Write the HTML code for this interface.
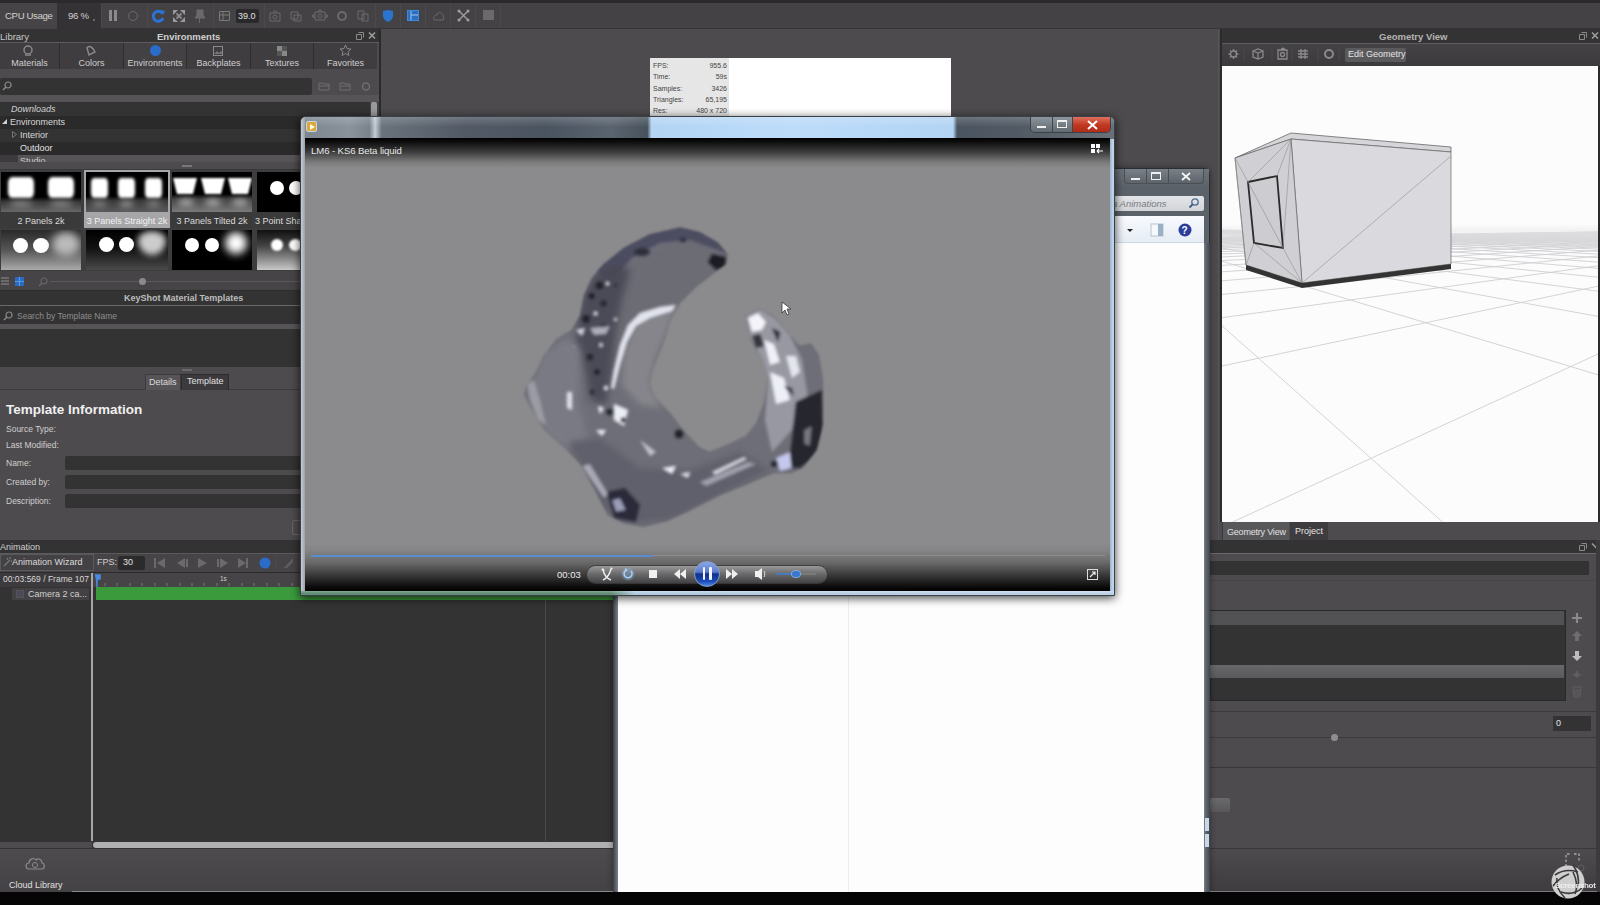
<!DOCTYPE html>
<html><head><meta charset="utf-8">
<style>
*{margin:0;padding:0;box-sizing:border-box}
html,body{width:1600px;height:905px;overflow:hidden;background:#111;font-family:"Liberation Sans",sans-serif;color:#ddd}
.a{position:absolute}
.t{position:absolute;white-space:nowrap;font-size:9px;line-height:1;color:#d8d8d8}
.sep{position:absolute;top:4px;width:1px;height:24px;background:#4a4a4c}
.ic{position:absolute;top:9px;width:14px;height:14px}
.tab{position:absolute;top:43px;height:26px;background:#403d40;border-right:1px solid #2e2d2e}
.tab .t{top:16px;width:100%;text-align:center;font-size:9px;color:#cfcfcf}
.th{position:absolute;background:#000;overflow:hidden}
.blob{position:absolute;background:#fff;filter:blur(1.5px)}
</style></head><body>
<div class="a" style="left:0;top:0;width:1600px;height:905px;background:#454245;overflow:hidden">

<!-- ================= TOP TOOLBAR ================= -->
<div class="a" style="left:0;top:0;width:1600px;height:30px;background:#454245"></div>
<div class="a" style="left:0;top:0;width:1600px;height:3px;background:#2a2a2c"></div>
<div class="a" style="left:0;top:28px;width:1600px;height:1px;background:#363436"></div>
<div class="a" style="left:0;top:3px;width:57px;height:26px;background:#474447"></div><div class="t" style="left:5px;top:11px;font-size:9.6px;letter-spacing:-0.35px;color:#d0d0d0">CPU Usage</div>
<div class="a" style="left:57px;top:3px;width:44px;height:26px;background:#343234"></div>
<div class="t" style="left:68px;top:11px;font-size:9.6px;letter-spacing:-0.3px;color:#d0d0d0">96 %</div><div class="a" style="left:93px;top:19px;width:2px;height:2px;background:#666"></div>
<div class="sep" style="left:101px"></div>
<div class="a" style="left:109px;top:10px;width:3px;height:11px;background:#8a8a8a"></div>
<div class="a" style="left:114px;top:10px;width:3px;height:11px;background:#8a8a8a"></div>
<div class="a" style="left:128px;top:11px;width:10px;height:10px;border:1.5px solid #6a6a6a;border-radius:50%"></div>
<div class="sep" style="left:147px"></div>
<svg class="a" style="left:151px;top:9px" width="14" height="14"><path d="M11.5 4.5 A5 5 0 1 0 12 9" fill="none" stroke="#2a74d8" stroke-width="3"/><path d="M9 1l5 1-2 4z" fill="#2a74d8"/></svg>
<svg class="a" style="left:173px;top:10px" width="12" height="12"><path d="M3.5 3.5L8.5 8.5M8.5 3.5L3.5 8.5" stroke="#8a8a8a" stroke-width="2"/><path d="M0 0h5l-5 5z M12 0v5l-5-5z M0 12v-5l5 5z M12 12h-5l5-5z" fill="#9a9a9a"/></svg>
<svg class="a" style="left:194px;top:9px" width="12" height="14"><path d="M3 1h6v5l2 3H1l2-3z M5.5 9v5" fill="#6a6a6a" stroke="#6a6a6a"/></svg>
<div class="sep" style="left:213px"></div>
<svg class="a" style="left:219px;top:11px" width="11" height="10"><path d="M0.5 0.5h10v9h-10z M0.5 4h10 M4 0.5v9" fill="none" stroke="#7a7a7a"/></svg>
<div class="a" style="left:236px;top:9px;width:23px;height:14px;background:#29292b;border-radius:2px"></div>
<div class="t" style="left:238px;top:12px;font-size:9px;color:#e0e0e0">39.0</div>
<div class="sep" style="left:264px"></div>
<svg class="a" style="left:269px;top:10px" width="12" height="12"><path d="M1 3h10v8H1z M4 3l1-2h2l1 2" fill="none" stroke="#6a6a6a"/><circle cx="6" cy="7" r="2" fill="none" stroke="#6a6a6a"/></svg>
<svg class="a" style="left:290px;top:10px" width="12" height="12"><path d="M1 2h7v7H1z M4 5h7v6H4z" fill="none" stroke="#6a6a6a"/></svg>
<svg class="a" style="left:311px;top:9px" width="18" height="13"><path d="M4 3h10v8H4z M7 3l1-2h2l1 2 M1 7l2-2v4z M17 7l-2-2v4z" fill="none" stroke="#6a6a6a"/><circle cx="9" cy="7" r="2" fill="none" stroke="#6a6a6a"/></svg>
<svg class="a" style="left:336px;top:10px" width="12" height="12"><circle cx="6" cy="6" r="4" fill="none" stroke="#6a6a6a" stroke-width="2"/></svg>
<svg class="a" style="left:357px;top:10px" width="12" height="12"><path d="M1 1h6v8H1z M5 4h6v7H5z" fill="none" stroke="#6a6a6a"/></svg>
<div class="sep" style="left:375px"></div>
<svg class="a" style="left:382px;top:9px" width="12" height="13"><path d="M1 2l5-1 5 1v5c0 3-3 5-5 6-2-1-5-3-5-6z" fill="#2a74d0"/></svg>
<div class="sep" style="left:400px"></div>
<svg class="a" style="left:407px;top:10px" width="12" height="11"><rect x="0.5" y="0.5" width="11" height="10" fill="#2c6fc0" stroke="#3d8ae0"/><path d="M4 1v9M4 5h7" stroke="#9cc6f0"/></svg>
<div class="sep" style="left:425px"></div>
<svg class="a" style="left:432px;top:9px" width="13" height="13"><path d="M2 11c-1-2 0-5 3-5 0-3 5-3 6 0 1 1 1 4 0 5z" fill="none" stroke="#6a6a6a"/></svg>
<div class="sep" style="left:450px"></div>
<svg class="a" style="left:457px;top:9px" width="13" height="13"><path d="M2 2l9 9M11 2L2 11" stroke="#a0a0a0" stroke-width="1.3"/><circle cx="2" cy="2" r="1.5" fill="#a0a0a0"/><circle cx="11" cy="2" r="1.5" fill="#a0a0a0"/><circle cx="2" cy="11" r="1.5" fill="#a0a0a0"/><circle cx="11" cy="11" r="1.5" fill="#a0a0a0"/></svg>
<div class="sep" style="left:475px"></div>
<div class="a" style="left:483px;top:10px;width:11px;height:10px;background:#6a6a6a"></div>
<div class="sep" style="left:500px"></div>
<!-- ================= LIBRARY PANEL ================= -->
<div class="a" style="left:0;top:29px;width:379px;height:512px;background:#4e4b4e"></div>
<div class="a" style="left:0;top:29px;width:379px;height:13px;background:#333333"></div>
<div class="t" style="left:0;top:32px;font-size:9.5px;color:#c8c8c8">Library</div>
<div class="t" style="left:157px;top:32px;font-size:9.5px;font-weight:bold;color:#d0d0d0">Environments</div>
<svg class="a" style="left:355px;top:31px" width="22" height="10"><path d="M1.5 3.5h5v5h-5z M3.5 1.5h5v5" fill="none" stroke="#8a8a8a"/><path d="M14 1.5l6 6M20 1.5l-6 6" stroke="#a0a0a0" stroke-width="1.5"/></svg>
<div class="a" style="left:0;top:42px;width:379px;height:1px;background:#5c5b5e"></div>
<div class="tab" style="left:0;width:60px"><svg class="a" style="left:22px;top:2px" width="12" height="12"><circle cx="6" cy="5" r="4" fill="none" stroke="#8a8a8a" stroke-width="1.5"/><path d="M3 9h6v2H3z" fill="#777"/></svg><div class="t">Materials</div></div>
<div class="tab" style="left:60px;width:64px"><svg class="a" style="left:25px;top:2px" width="12" height="12"><path d="M2 3c2-3 6-1 8 4l-6 3z" fill="none" stroke="#8a8a8a" stroke-width="1.5"/></svg><div class="t">Colors</div></div>
<div class="tab" style="left:124px;width:63px;background:#444144"><div class="a" style="left:26px;top:2px;width:11px;height:11px;border-radius:50%;background:#2a6cc8"></div><div class="t">Environments</div></div>
<div class="tab" style="left:187px;width:64px"><svg class="a" style="left:25px;top:2px" width="12" height="12"><rect x="1.5" y="1.5" width="9" height="9" fill="none" stroke="#8a8a8a"/><path d="M2 9l3-3 2 2 2-2 2 3" fill="#777"/></svg><div class="t">Backplates</div></div>
<div class="tab" style="left:251px;width:63px"><svg class="a" style="left:25px;top:2px" width="12" height="12"><rect x="1" y="1" width="5" height="5" fill="#888"/><rect x="6" y="6" width="5" height="5" fill="#888"/><rect x="6" y="1" width="5" height="5" fill="#555"/><rect x="1" y="6" width="5" height="5" fill="#555"/></svg><div class="t">Textures</div></div>
<div class="tab" style="left:314px;width:63px;border-right:none"><svg class="a" style="left:25px;top:1px" width="13" height="13"><path d="M6.5 1l1.6 3.6 3.9.4-2.9 2.6.8 3.9-3.4-2-3.4 2 .8-3.9L1 5l3.9-.4z" fill="none" stroke="#8a8a8a"/></svg><div class="t">Favorites</div></div>
<!-- search -->
<div class="a" style="left:0;top:78px;width:312px;height:17px;background:#333333;border-radius:2px"></div>
<svg class="a" style="left:2px;top:81px" width="10" height="10"><circle cx="6" cy="4" r="3" fill="none" stroke="#8a8a8a" stroke-width="1.2"/><path d="M4 6L1 9" stroke="#8a8a8a" stroke-width="1.5"/></svg>
<svg class="a" style="left:318px;top:80px" width="60" height="12"><path d="M1 3h4l1 1h5v6H1z M2 6h9" fill="none" stroke="#6e6e6e"/><path d="M22 3h4l1 1h5v6H22z M23 6h9" fill="none" stroke="#6e6e6e"/><circle cx="48" cy="6.5" r="3.5" fill="none" stroke="#6e6e6e" stroke-width="1.5"/></svg>
<div class="a" style="left:0;top:95px;width:379px;height:7px;background:#575457"></div>
<!-- tree -->
<div class="a" style="left:0;top:102px;width:370px;height:14px;background:#333333"></div>
<div class="a" style="left:0;top:116px;width:370px;height:13px;background:#2a2a2a"></div>
<div class="a" style="left:0;top:129px;width:370px;height:13px;background:#333333"></div>
<div class="a" style="left:0;top:142px;width:370px;height:13px;background:#2a2a2a"></div>
<div class="a" style="left:0;top:155px;width:370px;height:7px;background:#3c3a3c"></div>
<div class="a" style="left:18px;top:155px;width:352px;height:7px;background:#575457"></div>
<div class="a" style="left:370px;top:102px;width:9px;height:60px;background:#474447"></div>
<div class="a" style="left:371px;top:102px;width:6px;height:17px;background:#9a9a9c;border-radius:2px"></div>
<div class="t" style="left:11px;top:105px;font-size:9px;font-style:italic;color:#cfcfcf">Downloads</div>
<svg class="a" style="left:1px;top:118px" width="7" height="7"><path d="M6 1v5H1z" fill="#d0d0d0"/></svg>
<div class="t" style="left:10px;top:118px;font-size:9px;color:#d8d8d8">Environments</div>
<svg class="a" style="left:12px;top:131px" width="5" height="7"><path d="M0.5 0.5l4 3-4 3z" fill="none" stroke="#777"/></svg>
<div class="t" style="left:20px;top:131px;font-size:9px;color:#d8d8d8">Interior</div>
<div class="t" style="left:20px;top:144px;font-size:9px;color:#e0e0e0">Outdoor</div>
<div class="a" style="left:0;top:155px;width:379px;height:7px;overflow:hidden"><div class="t" style="left:20px;top:2px;font-size:9px;color:#ccc">Studio</div></div>
<!-- splitter -->
<div class="a" style="left:0;top:162px;width:379px;height:8px;background:#4e4b4e"></div>
<div class="a" style="left:0;top:169px;width:379px;height:1px;background:#38383a"></div>
<div class="a" style="left:182px;top:165px;width:10px;height:2px;border-left:2px dotted #777;border-right:2px dotted #777;background:#777"></div>
<!-- thumbnails area -->
<div class="a" style="left:0;top:170px;width:379px;height:101px;background:#3f3c3f"></div>
<!-- thumbs row1 -->
<div class="th" style="left:1px;top:172px;width:80px;height:40px;background:linear-gradient(#000 0,#000 62%,#3a3a3a 75%,#666 100%)">
 <div class="blob" style="left:7px;top:5px;width:26px;height:21px;border-radius:4px/6px"></div>
 <div class="blob" style="left:47px;top:5px;width:26px;height:21px;border-radius:4px/6px"></div>
 <div class="blob" style="left:8px;top:29px;width:24px;height:6px;border-radius:50%;background:#8a8a8a;filter:blur(3px)"></div>
 <div class="blob" style="left:48px;top:29px;width:24px;height:6px;border-radius:50%;background:#8a8a8a;filter:blur(3px)"></div>
</div>
<div class="a" style="left:0;top:212px;width:82px;height:16px;background:#3a3a3a"></div>
<div class="t" style="left:0;top:217px;width:82px;text-align:center;font-size:9px;color:#dcdcdc">2 Panels 2k</div>
<div class="a" style="left:84px;top:170px;width:86px;height:58px;background:#a6a6a8"></div>
<div class="th" style="left:86px;top:172px;width:82px;height:40px;background:linear-gradient(#000 0,#000 60%,#3a3a3a 72%,#5a5a5a 100%)">
 <div class="blob" style="left:5px;top:6px;width:17px;height:20px;border-radius:3px/5px"></div>
 <div class="blob" style="left:32px;top:6px;width:17px;height:20px;border-radius:3px/5px"></div>
 <div class="blob" style="left:59px;top:6px;width:17px;height:20px;border-radius:3px/5px"></div>
 <div class="blob" style="left:6px;top:29px;width:15px;height:6px;border-radius:50%;background:#888;filter:blur(3px)"></div>
 <div class="blob" style="left:33px;top:29px;width:15px;height:6px;border-radius:50%;background:#999;filter:blur(3px)"></div>
 <div class="blob" style="left:60px;top:29px;width:15px;height:6px;border-radius:50%;background:#888;filter:blur(3px)"></div>
</div>
<div class="t" style="left:84px;top:217px;width:86px;text-align:center;font-size:9px;color:#f2f2f2">3 Panels Straight 2k</div>
<div class="th" style="left:172px;top:172px;width:80px;height:40px;background:linear-gradient(#000 0,#000 55%,#444 68%,#7a7a7a 100%)">
 <svg class="a" style="left:0;top:0;filter:blur(0.8px)" width="80" height="40"><path d="M1 6h24l-4 16H5z M29 6h24l-4 16H33z M56 6h24l-4 16H60z" fill="#fff"/></svg>
 <div class="blob" style="left:6px;top:27px;width:16px;height:7px;border-radius:50%;background:#aaa;filter:blur(3px)"></div>
 <div class="blob" style="left:33px;top:27px;width:16px;height:7px;border-radius:50%;background:#aaa;filter:blur(3px)"></div>
 <div class="blob" style="left:60px;top:27px;width:16px;height:7px;border-radius:50%;background:#aaa;filter:blur(3px)"></div>
</div>
<div class="a" style="left:171px;top:212px;width:82px;height:16px;background:#3a3a3a"></div>
<div class="t" style="left:171px;top:217px;width:82px;text-align:center;font-size:9px;color:#dcdcdc">3 Panels Tilted 2k</div>
<div class="th" style="left:257px;top:172px;width:50px;height:40px;background:#000">
 <div class="blob" style="left:13px;top:9px;width:14px;height:14px;border-radius:50%;filter:blur(0.7px)"></div>
 <div class="blob" style="left:32px;top:9px;width:14px;height:14px;border-radius:50%;filter:blur(0.7px)"></div>
</div>
<div class="a" style="left:255px;top:212px;width:60px;height:16px;background:#3a3a3a"></div>
<div class="t" style="left:255px;top:217px;font-size:9px;color:#dcdcdc">3 Point Sha</div>
<!-- thumbs row2 -->
<div class="th" style="left:1px;top:230px;width:80px;height:40px;background:linear-gradient(#2a2a2a,#555 50%,#aaa 100%)">
 <div class="blob" style="left:12px;top:8px;width:15px;height:15px;border-radius:50%;filter:blur(0.7px)"></div>
 <div class="blob" style="left:32px;top:8px;width:16px;height:15px;border-radius:50%;filter:blur(0.7px)"></div>
 <div class="blob" style="left:51px;top:2px;width:28px;height:24px;border-radius:50%;background:#bbb;filter:blur(4px)"></div>
</div>
<div class="th" style="left:86px;top:230px;width:82px;height:40px;background:linear-gradient(#000,#111 45%,#4a4a4a 100%)">
 <div class="blob" style="left:13px;top:7px;width:15px;height:15px;border-radius:50%;filter:blur(0.7px)"></div>
 <div class="blob" style="left:33px;top:7px;width:15px;height:15px;border-radius:50%;filter:blur(0.7px)"></div>
 <div class="blob" style="left:52px;top:1px;width:28px;height:24px;border-radius:50% 50% 50% 50%/40% 40% 60% 60%;background:#ccc;filter:blur(3px)"></div>
</div>
<div class="th" style="left:172px;top:230px;width:80px;height:40px;background:#000">
 <div class="blob" style="left:13px;top:8px;width:14px;height:14px;border-radius:50%;filter:blur(0.7px)"></div>
 <div class="blob" style="left:33px;top:8px;width:14px;height:14px;border-radius:50%;filter:blur(0.7px)"></div>
 <div class="blob" style="left:53px;top:2px;width:22px;height:22px;border-radius:50%;filter:blur(4px)"></div>
</div>
<div class="th" style="left:257px;top:230px;width:50px;height:40px;background:linear-gradient(#111,#444 40%,#c8c8c8 100%)">
 <div class="blob" style="left:14px;top:9px;width:12px;height:12px;border-radius:50%;filter:blur(1.2px)"></div>
 <div class="blob" style="left:32px;top:9px;width:13px;height:12px;border-radius:50%;filter:blur(1.2px)"></div>
</div>
<!-- thumb toolbar -->
<div class="a" style="left:0;top:271px;width:379px;height:20px;background:#474447"></div>
<svg class="a" style="left:1px;top:277px" width="60" height="12"><path d="M0 1h8M0 4h8M0 7h8" stroke="#777" stroke-width="1.5"/><rect x="14" y="0" width="9" height="9" fill="#2a6ac0"/><path d="M18.5 0v9M14 4.5h9" stroke="#5a9ae0"/><circle cx="43" cy="4" r="3" fill="none" stroke="#666" stroke-width="1.2"/><path d="M41 6L38 9" stroke="#666" stroke-width="1.5"/></svg>
<div class="a" style="left:50px;top:281px;width:250px;height:1px;background:#5a5a5c"></div>
<div class="a" style="left:139px;top:278px;width:7px;height:7px;border-radius:50%;background:#8a8a8a"></div>
<div class="a" style="left:0;top:290px;width:379px;height:1px;background:#2e2d2e"></div>
<!-- templates -->
<div class="a" style="left:0;top:291px;width:379px;height:14px;background:#333333"></div>
<div class="t" style="left:124px;top:294px;font-size:9px;font-weight:bold;color:#bdbdbd">KeyShot Material Templates</div>
<div class="a" style="left:0;top:305px;width:379px;height:1px;background:#6a6a6c"></div>
<div class="a" style="left:0;top:306px;width:379px;height:18px;background:#333333"></div>
<svg class="a" style="left:3px;top:311px" width="10" height="10"><circle cx="6" cy="4" r="3" fill="none" stroke="#888" stroke-width="1.2"/><path d="M4 6L1 9" stroke="#888" stroke-width="1.5"/></svg>
<div class="t" style="left:17px;top:312px;font-size:8.5px;color:#8e8e8e">Search by Template Name</div>
<div class="a" style="left:0;top:324px;width:379px;height:5px;background:#575457"></div>
<div class="a" style="left:0;top:329px;width:379px;height:38px;background:#333333"></div>
<div class="a" style="left:182px;top:369px;width:10px;height:2px;background:#6a6a6c"></div>
<div class="a" style="left:0;top:389px;width:379px;height:1px;background:#3c3a3c"></div>
<div class="a" style="left:145px;top:374px;width:36px;height:16px;background:#575457;border:1px solid #3c3a3c;border-bottom:none"></div>
<div class="t" style="left:149px;top:378px;font-size:9px;color:#dcdcdc">Details</div>
<div class="a" style="left:181px;top:374px;width:48px;height:16px;background:#3c3a3c;border:1px solid #2e2d2e;border-bottom:none"></div>
<div class="t" style="left:187px;top:377px;font-size:9px;color:#e2e2e2">Template</div>
<div class="t" style="left:6px;top:403px;font-size:13.5px;font-weight:bold;color:#f0f0f0">Template Information</div>
<div class="t" style="left:6px;top:425px;font-size:8.5px;color:#cfcfcf">Source Type:</div>
<div class="t" style="left:6px;top:441px;font-size:8.5px;color:#cfcfcf">Last Modified:</div>
<div class="t" style="left:6px;top:459px;font-size:8.5px;color:#cfcfcf">Name:</div>
<div class="a" style="left:65px;top:456px;width:314px;height:14px;background:#333333;border-radius:2px"></div>
<div class="t" style="left:6px;top:478px;font-size:8.5px;color:#cfcfcf">Created by:</div>
<div class="a" style="left:65px;top:475px;width:314px;height:14px;background:#333333;border-radius:2px"></div>
<div class="t" style="left:6px;top:497px;font-size:8.5px;color:#cfcfcf">Description:</div>
<div class="a" style="left:65px;top:494px;width:314px;height:14px;background:#333333;border-radius:2px"></div>
<div class="a" style="left:292px;top:520px;width:10px;height:15px;border:1px solid #666;border-radius:2px"></div>
<div class="a" style="left:379px;top:29px;width:2px;height:512px;background:#2c2b2c"></div>
<!-- ================= MAIN VIEWPORT ================= -->
<div class="a" style="left:381px;top:29px;width:839px;height:570px;background:#4e4b4e"></div><div class="a" style="left:1218px;top:29px;width:1px;height:512px;background:#575457"></div>
<div class="a" style="left:650px;top:58px;width:301px;height:62px;background:#fff"></div>
<div class="a" style="left:650px;top:58px;width:79px;height:62px;background:#e6e6e6"></div>
<div class="t" style="left:653px;top:60px;font-size:7px;line-height:11.3px;color:#444">FPS:<br>Time:<br>Samples:<br>Triangles:<br>Res:</div>
<div class="t" style="left:680px;top:60px;width:47px;text-align:right;font-size:7px;line-height:11.3px;color:#444">955.6<br>59s<br>3426<br>65,195<br>480 x 720</div>

<!-- ================= GEOMETRY VIEW ================= -->
<div class="a" style="left:1220px;top:29px;width:380px;height:512px;background:#4e4b4e"></div>
<div class="a" style="left:1220px;top:29px;width:380px;height:14px;background:#333333"></div>
<div class="t" style="left:1379px;top:32px;font-size:9.5px;font-weight:bold;color:#b4b4b4">Geometry View</div>
<svg class="a" style="left:1578px;top:31px" width="22" height="10"><path d="M1.5 3.5h5v5h-5z M3.5 1.5h5v5" fill="none" stroke="#8a8a8a"/><path d="M14 1.5l6 6M20 1.5l-6 6" stroke="#a0a0a0" stroke-width="1.5"/></svg>
<div class="a" style="left:1220px;top:43px;width:380px;height:1px;background:#5c5b5e"></div>
<div class="a" style="left:1220px;top:44px;width:380px;height:22px;background:linear-gradient(#454245,#3c3a3c)"></div>
<svg class="a" style="left:1226px;top:47px" width="120" height="16">
 <g fill="none" stroke="#8a8a8a" stroke-width="1.3">
 <circle cx="7.5" cy="7" r="3"/><path d="M7.5 2v2M7.5 10v2M2.5 7h2M10.5 7h2M4 3.5l1.4 1.4M9.6 9.1L11 10.5M4 10.5l1.4-1.4M9.6 4.9L11 3.5"/>
 <path d="M27 4l5-2 5 2v6l-5 2-5-2z M27 4l5 2 5-2 M32 6v6"/>
 <path d="M52 3h9v9h-9z M55 3l1-1.5h2l1 1.5"/><circle cx="56.5" cy="7.5" r="2"/>
 <path d="M72 4h10M72 7h10M72 10h10M75 2v10M79 2v10"/>
 <circle cx="103" cy="7" r="4" stroke-width="2"/>
 </g>
 <path d="M18 2v12M46 2v12M66 2v12M92 2v12M113 2v12" stroke="#4a4a4c"/>
</svg>
<div class="a" style="left:1345px;top:48px;width:61px;height:14px;background:#5a595c;border-radius:2px"></div>
<div class="t" style="left:1348px;top:50px;font-size:9px;color:#e6e6e6">Edit Geometry</div>
<div class="a" style="left:1220px;top:29px;width:2px;height:493px;background:#2c2b2c"></div>
<div class="a" style="left:1222px;top:66px;width:376px;height:456px;background:#fcfcfd;overflow:hidden">
<svg width="376" height="456" style="position:absolute;left:0;top:0">
 <g stroke="#cfcfd3" stroke-width="0.9" fill="none">
  <path d="M0 460.9 L376 288.0"/>
  <path d="M0 300.0 L376 220.2"/>
  <path d="M0 251.7 L376 199.8"/>
  <path d="M0 228.5 L376 190.0"/>
  <path d="M0 214.8 L376 184.2"/>
  <path d="M0 205.8 L376 180.5"/>
  <path d="M0 199.4 L376 177.8"/>
  <path d="M0 194.6 L376 175.8"/>
  <path d="M0 190.9 L376 174.2"/>
  <path d="M0 188.0 L376 173.0"/>
  <path d="M0 185.6 L376 172.0"/>
  <path d="M0 183.6 L376 171.1"/>
  <path d="M0 181.9 L376 170.4"/>
  <path d="M0 180.5 L376 169.8"/>
  <path d="M0 179.3 L376 169.3"/>
  <path d="M0 178.2 L376 168.8"/>
  <path d="M0 177.2 L376 168.4"/>
  <path d="M0 176.4 L376 168.1"/>
  <path d="M0 175.6 L376 167.7"/>
  <path d="M0 174.9 L376 167.4"/>
  <path d="M0 174.3 L376 167.2"/>
  <path d="M0 173.7 L376 166.9"/>
  <path d="M0 173.2 L376 166.7"/>
  <path d="M0 172.7 L376 166.5"/>
  <path d="M0 172.3 L376 166.3"/>
  <path d="M0 171.9 L376 166.2"/>
  <path d="M0 171.5 L376 166.0"/>
  <path d="M0 171.2 L376 165.9"/>
  <path d="M0 259.8 L376 594.2"/>
  <path d="M0 195.2 L376 308.8"/>
  <path d="M0 182.0 L376 250.4"/>
  <path d="M0 176.3 L376 225.2"/>
  <path d="M0 173.1 L376 211.2"/>
  <path d="M0 171.1 L376 202.3"/>
  <path d="M0 169.7 L376 196.1"/>
  <path d="M0 168.7 L376 191.6"/>
  <path d="M0 167.9 L376 188.1"/>
  <path d="M0 167.3 L376 185.4"/>
  <path d="M0 166.8 L376 183.1"/>
  <path d="M0 166.4 L376 181.3"/>
  <path d="M0 166.0 L376 179.8"/>
  <path d="M0 165.7 L376 178.4"/>
  <path d="M0 165.5 L376 177.3"/>
  <path d="M0 165.2 L376 176.3"/>
  <path d="M0 165.0 L376 175.5"/>
  <path d="M0 164.9 L376 174.7"/>
  <path d="M0 164.7 L376 174.0"/>
  <path d="M0 164.6 L376 173.4"/>
  <path d="M0 164.5 L376 172.8"/>
  <path d="M0 164.3 L376 172.3"/>
  <path d="M0 164.2 L376 171.9"/>
  <path d="M0 164.1 L376 171.5"/>
  <path d="M0 164.1 L376 171.1"/>
 </g>
 <rect x="0" y="158" width="376" height="22" fill="url(#hz)"/>
 <defs><linearGradient id="hz" x1="0" y1="0" x2="0" y2="1"><stop offset="0" stop-color="#fcfcfd" stop-opacity="0.6"/><stop offset="0.3" stop-color="#e8e8ea" stop-opacity="0.55"/><stop offset="1" stop-color="#fcfcfd" stop-opacity="0"/></linearGradient></defs>
</svg>
<svg width="376" height="456" style="position:absolute;left:0;top:0">
 <path d="M13 92 L69 67 L229 81 L229 86 L69 73 Z" fill="#d6d5d9" stroke="#555" stroke-width="0.7"/>
 <path d="M69 73 L229 86 L229 198 L80 217 Z" fill="#dad9dd" stroke="#666" stroke-width="0.7"/>
 <path d="M13 92 L69 73 L80 217 L24 199 Z" fill="#d0cfd3" stroke="#666" stroke-width="0.7"/>
 <path d="M26 116 L55 110 L61 182 L32 177 Z" fill="#cdccd0" stroke="#2a2a2a" stroke-width="1.8"/>
 <g stroke="#8a8a8a" stroke-width="0.55" fill="none">
  <path d="M80 217 L229 90"/>
  <path d="M13 92 L26 116 M69 73 L26 116 M69 73 L55 110 M69 73 L61 182 M24 199 L32 177 M80 217 L61 182 M80 217 L32 177 M13 92 L24 199 M26 116 L61 182"/>
 </g>
 <path d="M24 199 L80 217 L229 198 L229 203 L80 222 L24 204 Z" fill="#333"/>
</svg>
</div>
<div class="a" style="left:1598px;top:66px;width:2px;height:456px;background:#2c2b2c"></div>
<div class="a" style="left:1222px;top:522px;width:67px;height:18px;background:#58575a;border-left:1px solid #3c3a3c"></div>
<div class="t" style="left:1227px;top:528px;font-size:9px;letter-spacing:-0.2px;color:#e0e0e0">Geometry View</div>
<div class="a" style="left:1290px;top:522px;width:38px;height:18px;background:#3f3c3f"></div>
<div class="t" style="left:1295px;top:527px;font-size:9px;color:#e6e6e6">Project</div>

<!-- ================= BOTTOM RIGHT PANEL ================= -->
<div class="a" style="left:1210px;top:540px;width:390px;height:352px;background:#4e4b4e"></div>
<div class="a" style="left:1210px;top:540px;width:390px;height:13px;background:#333333"></div>
<svg class="a" style="left:1578px;top:542px" width="22" height="10"><path d="M1.5 3.5h5v5h-5z M3.5 1.5h5v5" fill="none" stroke="#8a8a8a"/><path d="M14 1.5l6 6" stroke="#a0a0a0" stroke-width="1.5"/></svg>
<div class="a" style="left:1210px;top:553px;width:390px;height:1px;background:#6a696c"></div>
<div class="a" style="left:1210px;top:561px;width:379px;height:14px;background:#333333;border-radius:1px"></div>
<div class="a" style="left:1210px;top:580px;width:386px;height:1px;background:#474447"></div>
<div class="a" style="left:1210px;top:610px;width:356px;height:91px;background:#333333;border:1px solid #29292b"></div>
<div class="a" style="left:1210px;top:611px;width:354px;height:14px;background:#525154"></div>
<div class="a" style="left:1210px;top:665px;width:354px;height:13px;background:linear-gradient(#69686b,#59585b)"></div>
<svg class="a" style="left:1570px;top:610px" width="14" height="90">
 <path d="M7 3v10M2 8h10" stroke="#8a8a8c" stroke-width="2.2"/>
 <path d="M7 21l5 5H9v5H5v-5H2z" fill="#6e6e70"/>
 <path d="M7 51l5-5H9v-5H5v5H2z" fill="#bdbdbd"/>
 <path d="M7 60l2 4h3l-5 4-5-4h3z" fill="#5e5e60"/>
 <path d="M2 77h10M3 78l1 9h6l1-9 M5 79v7M7 79v7M9 79v7" stroke="#5e5e60" fill="none"/>
</svg>
<div class="a" style="left:1210px;top:711px;width:386px;height:1px;background:#3c3a3c"></div>
<div class="a" style="left:1553px;top:716px;width:38px;height:15px;background:#333333"></div>
<div class="t" style="left:1556px;top:719px;font-size:9px;color:#e6e6e6">0</div>
<div class="a" style="left:1210px;top:737px;width:386px;height:1px;background:#3c3a3c"></div>
<div class="a" style="left:1331px;top:734px;width:7px;height:7px;border-radius:50%;background:#8e8e90"></div>
<div class="a" style="left:1210px;top:767px;width:386px;height:1px;background:#38383a"></div>
<div class="a" style="left:1210px;top:798px;width:20px;height:14px;background:linear-gradient(#6a696c,#58575a);border-radius:2px"></div>
<div class="a" style="left:1210px;top:848px;width:390px;height:1px;background:#38383a"></div>
<div class="a" style="left:1210px;top:849px;width:390px;height:43px;background:linear-gradient(#4e4b4e,#3f3c3f)"></div>
<div class="a" style="left:1596px;top:540px;width:4px;height:352px;background:#3c3a3c"></div>


<!-- ================= ANIMATION PANEL ================= -->
<div class="a" style="left:0;top:540px;width:613px;height:352px;background:#333333"></div>
<div class="a" style="left:0;top:540px;width:613px;height:13px;background:#333333"></div>
<div class="t" style="left:0;top:543px;font-size:9px;color:#cfcfcf">Animation</div>
<div class="a" style="left:0;top:553px;width:613px;height:1px;background:#5a595c"></div>
<div class="a" style="left:0;top:554px;width:613px;height:18px;background:#474447"></div>
<div class="a" style="left:0;top:554px;width:94px;height:17px;background:#444144;border:1px solid #5a595c"></div>
<svg class="a" style="left:2px;top:556px" width="10" height="12"><path d="M2 10l6-6M5 2l1 2M8 1l0 2M9 5l2 0" stroke="#777" stroke-width="1.3"/></svg>
<div class="t" style="left:12px;top:558px;font-size:9px;color:#dcdcdc">Animation Wizard</div>
<div class="t" style="left:97px;top:558px;font-size:9px;color:#d0d0d0">FPS:</div>
<div class="a" style="left:118px;top:556px;width:27px;height:14px;background:#2c2b2c;border-radius:2px"></div>
<div class="t" style="left:123px;top:558px;font-size:9px;color:#e0e0e0">30</div>
<svg class="a" style="left:150px;top:555px" width="150" height="16">
 <path d="M5 3v10" stroke="#6a6a6c" stroke-width="2"/><path d="M15 3v10L7 8z" fill="#6a6a6c"/>
 <path d="M35 3v10L27 8z" fill="#6a6a6c"/><path d="M37 4v8" stroke="#6a6a6c" stroke-width="2"/>
 <path d="M48 3v10l9-5z" fill="#6a6a6c"/>
 <path d="M68 4v8" stroke="#6a6a6c" stroke-width="2"/><path d="M70 3v10l8-5z" fill="#6a6a6c"/>
 <path d="M88 3v10l8-5z" fill="#6a6a6c"/><path d="M97 3v10" stroke="#6a6a6c" stroke-width="2"/>
 <circle cx="115" cy="8" r="5.5" fill="#2a6cc8"/>
 <path d="M126 2v12" stroke="#4a4a4c"/>
 <path d="M134 13l9-10v4l-6 6z" fill="#5e5e60"/>
</svg>
<div class="a" style="left:0;top:572px;width:613px;height:1px;background:#2c2b2c"></div>
<div class="a" style="left:0;top:573px;width:91px;height:14px;background:#3c3a3c"></div>
<div class="t" style="left:3px;top:575px;font-size:8.5px;color:#d8d8d8">00:03:569 / Frame 107</div>
<div class="a" style="left:93px;top:573px;width:520px;height:14px;background:#474447"></div>
<svg class="a" style="left:93px;top:573px" width="520" height="14">
 <path d="M12 10v3M24 10v3M37 10v3M49 10v3M62 10v3M74 10v3M87 10v3M99 10v3M111 10v3M124 10v3M136 10v3M149 10v3M161 10v3M174 10v3M186 10v3M199 10v3M211 10v3" stroke="#888" stroke-width="0.8"/>
 <path d="M2 2h5v4h-3v8" stroke="#4a8ae0" stroke-width="1.5" fill="#4a8ae0"/>
 <text x="127" y="8" font-family="Liberation Sans" font-size="6.5" fill="#ccc">1s</text>
</svg>
<div class="a" style="left:12px;top:588px;width:77px;height:12px;background:#444144"></div>
<div class="a" style="left:16px;top:590px;width:8px;height:8px;background:#4a4a5a;border:1px solid #555"></div>
<div class="t" style="left:28px;top:590px;font-size:9px;color:#d0d0d0">Camera 2 ca...</div>
<div class="a" style="left:96px;top:587px;width:517px;height:13px;background:#3a9a3c"></div>
<div class="a" style="left:91px;top:573px;width:1.5px;height:268px;background:#a8a8aa"></div>
<div class="a" style="left:545px;top:600px;width:1px;height:241px;background:#4a4a4c"></div>
<div class="a" style="left:0;top:842px;width:92px;height:6px;background:#4e4b4e"></div>
<div class="a" style="left:93px;top:842px;width:520px;height:6px;background:#b0b0b2;border-radius:3px 0 0 3px"></div>
<div class="a" style="left:0;top:849px;width:613px;height:43px;background:linear-gradient(#4e4b4e,#454245)"></div>
<svg class="a" style="left:24px;top:854px" width="22" height="18"><path d="M5 15c-4 0-4-6 0-6 0-4 5-6 7-3 2-2 6-1 6 3 3 0 3 6 0 6z" fill="none" stroke="#8a8a8c" stroke-width="1.2"/><circle cx="11" cy="11" r="2.5" fill="none" stroke="#8a8a8c"/></svg>
<div class="t" style="left:9px;top:881px;font-size:9px;color:#e0e0e0">Cloud Library</div>
<div class="a" style="left:72px;top:891px;width:541px;height:1px;background:#8a8a8c"></div>
<!-- ================= EXPLORER WINDOW ================= -->
<div class="a" style="left:613px;top:168px;width:597px;height:724px;background:#5c6269;border-radius:6px 6px 0 0;border:1px solid #2a2e33;box-shadow:0 0 6px rgba(0,0,0,0.4)"></div>
<div class="a" style="left:614px;top:169px;width:595px;height:20px;background:linear-gradient(#6e747b,#5a6067)"></div>
<div class="a" style="left:1124px;top:169px;width:80px;height:15px;background:linear-gradient(#7a8088,#5e646b);border:1px solid #4a4f55;border-top:none;border-radius:0 0 4px 4px"></div>
<div class="a" style="left:1146px;top:169px;width:1px;height:15px;background:#4a4f55"></div>
<div class="a" style="left:1168px;top:169px;width:1px;height:15px;background:#4a4f55"></div>
<div class="a" style="left:1131px;top:178px;width:9px;height:2px;background:#f0f0f0"></div>
<div class="a" style="left:1151px;top:172px;width:10px;height:8px;border:1.5px solid #f0f0f0;border-top-width:2.5px"></div>
<svg class="a" style="left:1181px;top:172px" width="10" height="9"><path d="M1 1l8 7M9 1L1 8" stroke="#f4f4f4" stroke-width="1.8"/></svg>
<div class="a" style="left:1110px;top:196px;width:94px;height:15px;background:linear-gradient(#e4e5e8,#d2d4d8);border-radius:2px"></div>
<div class="t" style="left:1112px;top:199px;font-size:9.5px;font-style:italic;color:#7a7d82">a Animations</div>
<svg class="a" style="left:1188px;top:197px" width="12" height="12"><circle cx="7" cy="5" r="3.2" fill="none" stroke="#4a6a90" stroke-width="1.3"/><path d="M4.6 7.4L1.5 10.5" stroke="#3a5a80" stroke-width="1.8"/></svg>
<div class="a" style="left:618px;top:216px;width:586px;height:27px;background:linear-gradient(#f8fafd,#e6edf5);border-bottom:1px solid #cfd8e2"></div>
<svg class="a" style="left:1124px;top:222px" width="80" height="16">
 <path d="M3 7h6l-3 3z" fill="#222"/>
 <rect x="27" y="2" width="12" height="12" fill="#f4f8fc" stroke="#b8c4d0"/><rect x="34" y="2" width="5" height="12" fill="#9ab0c8"/>
 <circle cx="61" cy="8" r="6.5" fill="#2a3e9a"/><text x="57.5" y="12" font-family="Liberation Sans" font-size="10" font-weight="bold" fill="#fff">?</text>
</svg>
<div class="a" style="left:618px;top:243px;width:586px;height:649px;background:#fdfdfe"></div>
<div class="a" style="left:848px;top:596px;width:1px;height:296px;background:#ececf0"></div>
<div class="a" style="left:1204px;top:243px;width:6px;height:649px;background:linear-gradient(90deg,#7a8088,#5a6068 40%,#4a5058 80%,#3a4048)"></div>
<div class="a" style="left:1205px;top:818px;width:4px;height:13px;background:#c8d8e8"></div>
<div class="a" style="left:1205px;top:834px;width:4px;height:13px;background:#c8d8e8"></div>
<div class="a" style="left:613px;top:596px;width:5px;height:296px;background:linear-gradient(90deg,#3a3e44,#5a6068 50%,#7a8088)"></div>

<!-- ================= WMP WINDOW ================= -->
<div class="a" style="left:300px;top:116px;width:815px;height:480px;border-radius:6px 6px 0 0;background:#a9b1b9;border:1px solid #3a4048;overflow:hidden;box-shadow:0 2px 10px rgba(0,0,0,0.75)">
 <!-- glass title bar reflections -->
 <div class="a" style="left:0;top:0;width:815px;height:22px;background:linear-gradient(90deg,#7c848e 0,#8a929c 6%,#7a828c 8.4%,#c4ccd6 9.1%,#6a727c 9.9%,#525a66 20%,#4a5460 30%,#5a6470 38%,#48525c 42.5%,#b4d4f4 43%,#bcdcfa 60%,#b4d4f4 80%,#4a5460 80.5%,#545c66 90%,#6a7078 100%)"></div>
 <div class="a" style="left:0;top:0;width:815px;height:10px;background:linear-gradient(rgba(255,255,255,0.18),rgba(255,255,255,0))"></div>
 <div class="a" style="left:0;top:0;width:4px;height:480px;background:linear-gradient(90deg,#c8ccd2,#9aa2aa)"></div>
 <div class="a" style="left:809px;top:22px;width:5px;height:458px;background:linear-gradient(90deg,#98b0c8,#c4d8ee 60%,#a8bcd0)"></div>
 <div class="a" style="left:0;top:474px;width:815px;height:6px;background:linear-gradient(90deg,#5e8e74 0,#5e8e74 38%,#b8d0e8 41%,#c4d8ee 100%)"></div><div class="a" style="left:0;top:474px;width:815px;height:6px;background:linear-gradient(rgba(255,255,255,0.25) 0,rgba(0,0,0,0.05) 50%,rgba(255,255,255,0.3) 100%)"></div>
</div>
<!-- title icon -->
<div class="a" style="left:306px;top:121px;width:11px;height:11px;background:#d8a838;border:1px solid #c8d8e8;border-radius:2px"></div>
<svg class="a" style="left:308px;top:123px" width="8" height="8"><path d="M2 1v6l5-3z" fill="#fff8e0"/></svg>
<!-- caption buttons -->
<div class="a" style="left:1030px;top:117px;width:81px;height:16px;border-radius:0 0 5px 5px;overflow:hidden;border:1px solid #3a4048;border-top:none">
 <div class="a" style="left:0;top:0;width:21px;height:16px;background:linear-gradient(#8c949c,#5e666e)"></div>
 <div class="a" style="left:21px;top:0;width:20px;height:16px;background:linear-gradient(#8c949c,#5e666e);border-left:1px solid #40464e"></div>
 <div class="a" style="left:41px;top:0;width:40px;height:16px;background:linear-gradient(#e07060,#c03820 50%,#b02a18);border-left:1px solid #40464e"></div>
 <div class="a" style="left:6px;top:9px;width:9px;height:2px;background:#f0f0f0"></div>
 <div class="a" style="left:26px;top:3px;width:10px;height:8px;border:1.5px solid #f0f0f0;border-top-width:2.5px"></div>
 <svg class="a" style="left:56px;top:3px" width="11" height="10"><path d="M1 1l9 8M10 1L1 9" stroke="#fff" stroke-width="2"/></svg>
</div>
<!-- content -->
<div class="a" style="left:305px;top:138px;width:805px;height:453px;background:#8b8b8d;overflow:hidden">
 <div class="a" style="left:0;top:0;width:805px;height:30px;background:linear-gradient(#000 0,#0a0a0a 10%,#3a3a3a 45%,#7a7a7a 80%,#8b8b8d 100%)"></div>
 <div class="a" style="left:0;top:405px;width:805px;height:48px;background:linear-gradient(#8b8b8d 0,#858587 15%,#6a6a6a 40%,#333 70%,#0a0a0a 92%,#000 100%)"></div>
 <div class="a" style="left:6px;top:417px;width:794px;height:1px;background:#8e8e90"></div>
 <div class="a" style="left:6px;top:417px;width:342px;height:2px;background:#5a8ad0"></div>
</div>
<div class="t" style="left:311px;top:146px;font-size:9.6px;letter-spacing:-0.1px;color:#e8e8e8">LM6 - KS6 Beta liquid</div>
<svg class="a" style="left:1091px;top:144px" width="12" height="11"><rect x="0" y="0" width="4" height="4" fill="#fff"/><rect x="5" y="0" width="4" height="4" fill="#fff"/><rect x="0" y="5" width="4" height="4" fill="#fff"/><path d="M6 7h6M6 7l2-2M6 7l2 2" stroke="#fff" stroke-width="1.2"/></svg>
<div class="t" style="left:557px;top:570px;font-size:9.5px;color:#eaeaea">00:03</div>
<div class="a" style="left:586px;top:565px;width:242px;height:19px;border-radius:10px;background:linear-gradient(#a4a4a6,#707072 50%,#4a4a4c);border:1px solid #3c3a3c;opacity:0.85"></div>
<svg class="a" style="left:586px;top:562px" width="242" height="26">
 <path d="M17 8 Q19 16 25 18 M25 7 Q23 15 17 18" stroke="#f0f0f0" stroke-width="1.4" fill="none"/><path d="M15 8l2-2 2 3z M27 7l-2-2-1 3z" fill="#f0f0f0"/>
 <circle cx="42" cy="12" r="6.5" fill="rgba(140,190,240,0.3)"/><path d="M45 9 A4 4 0 1 1 40 8.3" fill="none" stroke="#a8d0f4" stroke-width="1.5"/><path d="M39 6l3 2-3 2z" fill="#a8d0f4"/>
 <rect x="63" y="8" width="8" height="8" fill="#f0f0f0"/>
 <path d="M94 12l6-5v10z M88 12l6-5v10z" fill="#f0f0f0"/>
 <path d="M140 7l6 5-6 5z M146 7l6 5-6 5z" fill="#f0f0f0"/>
 <path d="M169 9h3l4-3v12l-4-3h-3z" fill="#f0f0f0"/><path d="M178 9c1 1 1 5 0 6" stroke="#ddd" fill="none"/>
 <path d="M190 12h40" stroke="#8a8a8c" stroke-width="1"/><path d="M190 12h20" stroke="#3a78d0" stroke-width="1.5"/>
 <ellipse cx="210" cy="12" rx="4.5" ry="3.5" fill="#3a78d0" stroke="#8ab8f0" stroke-width="0.8"/>
</svg>
<div class="a" style="left:694px;top:561px;width:26px;height:26px;border-radius:50%;background:linear-gradient(#8aa8e8 0,#5a7ad0 42%,#10308a 50%,#1a4ab8 80%,#4a8ae8 100%);border:1.5px solid #8aa0c0"></div>
<div class="a" style="left:702.5px;top:567px;width:2.5px;height:13px;background:#f4f6fc;border-radius:1px"></div>
<div class="a" style="left:709px;top:567px;width:2.5px;height:13px;background:#f4f6fc;border-radius:1px"></div>
<svg class="a" style="left:1087px;top:569px" width="11" height="11"><rect x="0.5" y="0.5" width="10" height="10" fill="none" stroke="#ddd"/><path d="M3 8l5-5M5 3h3v3" stroke="#eee" stroke-width="1.2" fill="none"/></svg>

<!-- bottom black strip -->
<div class="a" style="left:0;top:892px;width:1600px;height:13px;background:#050505"></div>
<div class="a" style="left:1210px;top:891px;width:387px;height:1px;background:#7a787a"></div>
<svg class="a" style="left:1545px;top:850px" width="55" height="55">
 <path d="M21 12V4h4M29 4h5v8M21 14v4" stroke="#aaa" stroke-width="1.3" fill="none" stroke-dasharray="2.5 2"/>
 <circle cx="36" cy="18" r="3" fill="none" stroke="#666" stroke-width="0.8"/>
 <circle cx="23" cy="32" r="16.5" fill="#cfcfcf"/>
 <g stroke="#3a3a3a" stroke-width="1.6" fill="none">
  <path d="M10 25 Q20 18 33 22"/><path d="M28 15 Q35 25 33 36"/><path d="M37 38 Q28 46 16 42"/><path d="M20 48 Q10 38 12 28"/><path d="M8 36 Q14 28 24 24"/><path d="M30 44 Q34 34 28 22"/>
 </g>
 <text x="10" y="38" font-family="Liberation Sans" font-size="8" font-weight="bold" fill="#f4f4f4" opacity="0.9" letter-spacing="-0.3">Screenshot</text>
</svg>
<!-- liquid -->
<svg class="a" style="left:305px;top:138px" width="805" height="453" viewBox="305 138 805 453">
 <defs>
  <filter id="b1" x="-30%" y="-30%" width="160%" height="160%"><feGaussianBlur stdDeviation="1.2"/></filter>
  <filter id="b2" x="-50%" y="-50%" width="200%" height="200%"><feGaussianBlur stdDeviation="3"/></filter>
  <filter id="b3" x="-50%" y="-50%" width="200%" height="200%"><feGaussianBlur stdDeviation="6"/></filter>
  <filter id="b0" x="-30%" y="-30%" width="160%" height="160%"><feGaussianBlur stdDeviation="1"/></filter>
  <filter id="gb" x="-5%" y="-5%" width="110%" height="110%"><feGaussianBlur stdDeviation="0.9"/></filter>
  <clipPath id="lc"><path id="lq" d="M727.7 253.8 L717.8 241.9 L699.9 231.9 L680 227 L649.3 233.9 L623.4 247.8 L603.5 263.8 L591.6 277.7 L583.6 295.6 L579.7 315.5 L571.7 329.4 L555.8 339.3 L543.9 355.2 L535.9 371.2 L526 387 L524 395 L532 410 L544 430 L563.8 447.6 L579.7 463.5 L595.6 491.4 L607.5 515.2 L623.4 523.2 L643.3 527.2 L667.2 521.2 L689 511.3 L719.8 495.4 L749.6 483.4 L773.5 473.5 L791.4 473.5 L803.3 467.5 L817.2 449.6 L823.2 423.8 L823.2 380 L819.2 355.2 L811.3 343.3 L799.3 345.3 L787.4 331.4 L773.5 315.5 L759.6 308.5 L745.6 315.5 L749.6 339.3 L763.5 363.2 L767.5 380 L763.5 403.9 L755.6 423.8 L745.6 435.7 L729.7 443.6 L709.8 451.6 L700 447.6 L683 429.7 L671.2 413.8 L656 398 L650 385 L653 370 L659 355 L665 340 L671 320 L680 303.5 L695.9 287.6 L715.8 271.7 L726.7 263.8 Z"/></clipPath>
 </defs>
 <g filter="url(#gb)"><use href="#lq" fill="#6e6e78"/>
 <g clip-path="url(#lc)">
  <!-- smooth inner surface of upper arm -->
  <path d="M630 262 L690 238 L722 252 L712 275 L690 292 L672 306 L640 313 L625 335 L615 360 L612 300 Z" fill="#6c6c74" filter="url(#b2)"/>
  <!-- inner surface near hole -->
  <path d="M640 318 L676 306 L668 330 L655 360 L650 385 L662 408 L640 405 L622 385 L624 350 Z" fill="#85858b" filter="url(#b2)"/>
  <!-- top rim bluish dark -->
  <path d="M596 270 L622 248 L650 234 L680 227 L700 231 L718 242 L728 254 L712 248 L690 240 L660 243 L632 258 L610 282 Z" fill="#4e4e62" filter="url(#b1)"/>
  <path d="M712 254 L726 257 L725 267 L716 270 L708 262 Z" fill="#1c1c24" filter="url(#b0)"/>
  <ellipse cx="642" cy="252" rx="8" ry="4" fill="#2e2e3a" filter="url(#b1)"/>
  <ellipse cx="683" cy="240" rx="3" ry="2" fill="#2a2a34" filter="url(#b0)"/>
  <!-- textured left ridge -->
  <path d="M584 292 L596 272 L616 262 L630 270 L622 300 L616 330 L612 370 L606 405 L590 400 L585 370 L576 340 L578 318 Z" fill="#4a4a56" filter="url(#b2)" opacity="0.9"/>
  <circle cx="597" cy="372" r="3" fill="#22222c" filter="url(#b0)"/>
  <circle cx="606" cy="388" r="2.2" fill="#e4e4ee" filter="url(#b0)"/>
  <circle cx="592" cy="392" r="2.5" fill="#2a2a34" filter="url(#b0)"/>
  <circle cx="601" cy="345" r="2" fill="#dcdce8" filter="url(#b0)"/>
  <circle cx="599.6" cy="285.6" r="4" fill="#22222a" filter="url(#b0)"/>
  <circle cx="591.6" cy="296" r="3" fill="#1e1e26" filter="url(#b0)"/>
  <circle cx="603.5" cy="303.5" r="3.2" fill="#26262e" filter="url(#b0)"/>
  <circle cx="586" cy="319" r="4" fill="#22222a" filter="url(#b0)"/>
  <circle cx="603.5" cy="327" r="3" fill="#2a2a32" filter="url(#b0)"/>
  <circle cx="590" cy="357" r="3.5" fill="#26262e" filter="url(#b0)"/>
  <circle cx="615.5" cy="285.6" r="2" fill="#30303a" filter="url(#b0)"/>
  <circle cx="607.5" cy="283.6" r="1.8" fill="#eef0f8" filter="url(#b0)"/>
  <circle cx="595.6" cy="313.5" r="2" fill="#e8e8f2" filter="url(#b0)"/>
  <circle cx="615.5" cy="319.4" r="1.6" fill="#e0e0ea" filter="url(#b0)"/>
  <path d="M576 330 L585 328 L582 336 Z" fill="#d8d8e4" filter="url(#b0)"/>
  <circle cx="573.7" cy="347.3" r="1.5" fill="#d0d0dc" filter="url(#b0)"/>
  <path d="M590 328 L610 326 L606 334 L594 335 Z" fill="#c8c8d4" filter="url(#b0)" opacity="0.8"/>
  <!-- white streak along inner edge -->
  <path d="M676 305 L660 307 L640 313 L628 325 L620 345 L614 370 L611 388 L614 389 L620 365 L627 342 L636 326 L650 318 L672 311 Z" fill="#eef0fa" filter="url(#b0)" opacity="0.9"/>
  <!-- left lobe -->
  <path d="M528 392 L545 352 L568 338 L580 350 L578 400 L588 440 L565 450 L540 428 Z" fill="#7a7a84" filter="url(#b2)"/>
  <path d="M527 384 L534 380 L540 400 L546 425 L538 420 L530 400 Z" fill="#a4a4ae" filter="url(#b0)" opacity="0.8"/>
  <path d="M567 392 L572 392 L572 410 L567 408 Z" fill="#e0e0ea" filter="url(#b0)"/>
  <!-- lower body -->
  <path d="M568 442 L600 438 L640 468 L690 470 L740 452 L770 470 L720 495 L670 520 L625 524 L600 505 Z" fill="#60606c" filter="url(#b2)"/>
  <path d="M607 492 L625 488 L640 505 L636 522 L614 518 Z" fill="#2c2c3a" filter="url(#b1)"/>
  <path d="M612 500 L620 498 L626 510 L616 512 Z" fill="#b8bcd8" filter="url(#b0)" opacity="0.8"/>
  <path d="M582 466 L590 464 L608 494 L604 498 Z" fill="#c8c8d4" filter="url(#b0)" opacity="0.7"/>
  <path d="M598 406 L604 408 L600 414 Z" fill="#f0f0f8" filter="url(#b0)"/>
  <path d="M614 404 L628 410 L624 426 L614 420 Z" fill="#eceef6" filter="url(#b0)"/>
  <circle cx="609.5" cy="412" r="3.5" fill="#2a2a34" filter="url(#b0)"/>
  <circle cx="623.4" cy="420" r="2.5" fill="#30303a" filter="url(#b0)"/>
  <path d="M596 430 L606 430 L602 436 Z" fill="#eaeaf2" filter="url(#b0)"/>
  <circle cx="679" cy="434" r="4.5" fill="#22222c" filter="url(#b0)"/>
  <path d="M662 468 L676 466 L672 474 Z" fill="#f0f0f8" filter="url(#b0)"/>
  <path d="M680 474 L690 472 L688 478 Z" fill="#e0e0ea" filter="url(#b0)"/>
  <path d="M640 440 L656 452 L650 456 Z" fill="#d8d8e2" filter="url(#b0)" opacity="0.8"/>
  <path d="M700 482 L748 462 L756 464 L706 486 Z" fill="#a0a0ac" filter="url(#b1)"/>
  <path d="M712 472 L744 457 L747 459 L715 475 Z" fill="#d8d8e2" filter="url(#b0)"/>
  <!-- right arm -->
  <path d="M746 316 L760 309 L775 318 L790 335 L802 360 L808 398 L792 430 L772 452 L765 420 L768 380 L762 360 L750 338 Z" fill="#9898a2" filter="url(#b1)"/>
  <path d="M748 318 L758 313 L766 322 L762 330 L752 332 Z" fill="#f4f4fa" filter="url(#b0)"/>
  <path d="M752 336 L760 334 L764 346 L756 348 Z" fill="#34343e" filter="url(#b0)"/>
  <path d="M764 340 L774 344 L780 362 L770 365 Z" fill="#f0f0f8" filter="url(#b0)"/>
  <path d="M772 328 L780 332 L778 342 Z" fill="#2e2e38" filter="url(#b0)"/>
  <path d="M770 372 L784 378 L790 400 L776 404 Z" fill="#eef0f8" filter="url(#b0)"/>
  <path d="M786 356 L796 356 L800 372 L792 378 Z" fill="#e4e6ee" filter="url(#b0)"/>
  <path d="M784 386 L792 388 L794 396 Z" fill="#3a3a44" filter="url(#b0)"/>
  <path d="M796 402 L822 390 L823 432 L815 456 L800 468 L788 468 L792 438 Z" fill="#28282f" filter="url(#b1)"/>
  <path d="M804 430 L812 426 L810 446 L804 444 Z" fill="#9a9aa6" filter="url(#b0)" opacity="0.7"/>
  <path d="M776 458 L790 452 L792 468 L780 471 Z" fill="#c4c8ec" filter="url(#b0)"/>
  <circle cx="774" cy="464" r="3" fill="#22222c" filter="url(#b0)"/>
 </g></g>
 <!-- cursor -->
 <path d="M782 302 L782 313 L785 310 L787 315 L789 314 L787 309 L791 309 Z" fill="#fff" stroke="#222" stroke-width="0.7"/>
</svg>
</div></body></html>
